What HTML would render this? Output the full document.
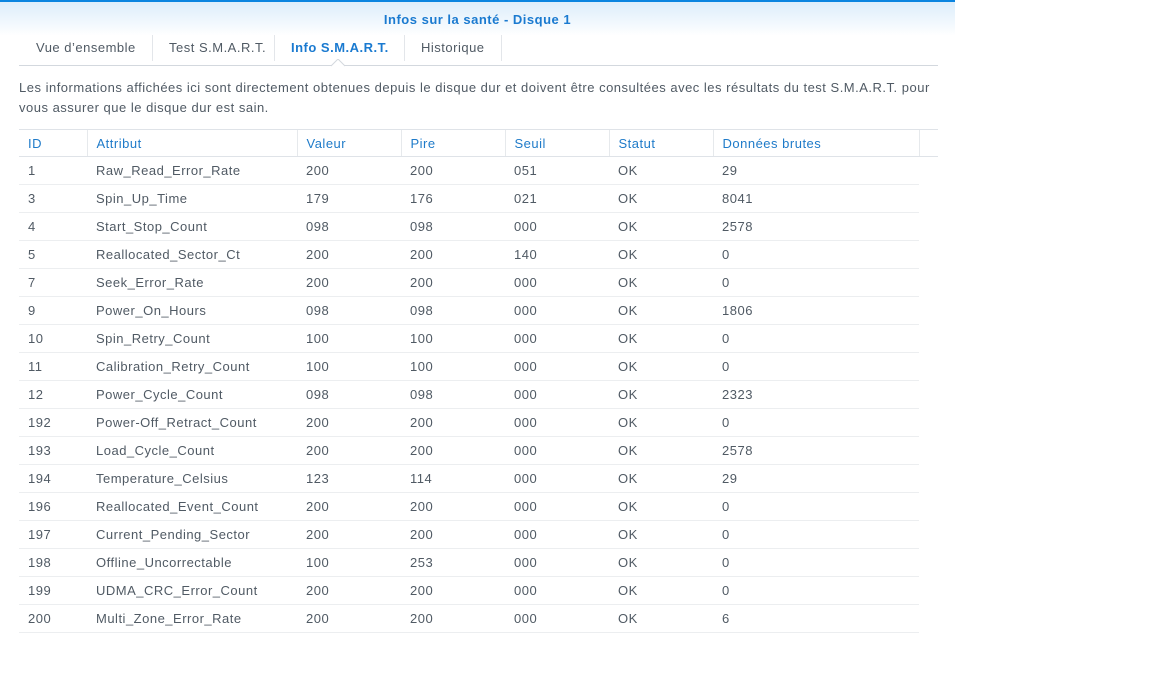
<!DOCTYPE html>
<html><head><meta charset="utf-8"><style>
body{margin:0;width:1152px;height:700px;background:#fff;font-family:"Liberation Sans",Tahoma,sans-serif;font-size:13px;color:#505a64;position:relative;overflow:hidden;letter-spacing:0.5px}
.a{position:absolute;white-space:nowrap}
.top{left:0;top:0;width:955px;height:2px;background:#0a84e0}
.hdr{left:0;top:2px;width:955px;height:34px;background:linear-gradient(#dcedfb,#ffffff)}
.title{left:0;width:955px;top:12px;text-align:center;font-weight:bold;color:#1a7ad0}
.tab{top:40px}
.sep{top:35px;width:1px;height:26px;background:#e3e6ea}
.uline{left:19px;top:65px;width:919px;height:1px;background:#d3d8de}
table{position:absolute;left:19px;top:129px;border-collapse:collapse;table-layout:fixed}
td,th{height:27px;padding:0 0 0 9px;text-align:left;font-weight:normal;border-bottom:1px solid #eceef0;white-space:nowrap}
th{height:26px;color:#1f7bc9;border-top:1px solid #dfe3e8;border-bottom:1px solid #dfe3e8;border-left:1px solid #e6e9ec}
th:first-child{border-left:none}
</style></head><body>
<div class="a top"></div><div class="a hdr"></div>
<div class="a title">Infos sur la santé - Disque 1</div>
<div class="a tab" style="left:36px">Vue d’ensemble</div>
<div class="a sep" style="left:152px"></div>
<div class="a tab" style="left:169px">Test S.M.A.R.T.</div>
<div class="a sep" style="left:274px"></div>
<div class="a tab" style="left:291px;font-weight:bold;color:#1a7ad0">Info S.M.A.R.T.</div>
<div class="a sep" style="left:404px"></div>
<div class="a tab" style="left:421px">Historique</div>
<div class="a sep" style="left:501px"></div>
<div class="a uline"></div>
<svg class="a" style="left:331px;top:59px" width="14" height="8"><path d="M0 7 L7 0 L14 7" fill="#fff" stroke="#d3d8de"/></svg>
<div class="a" style="left:19px;top:78px;line-height:20px">Les informations affichées ici sont directement obtenues depuis le disque dur et doivent être consultées avec les résultats du test S.M.A.R.T. pour<br>vous assurer que le disque dur est sain.</div>
<table>
<colgroup><col style="width:68px"><col style="width:210px"><col style="width:104px"><col style="width:104px"><col style="width:104px"><col style="width:104px"><col style="width:206px"><col style="width:19px"></colgroup>
<tr><th>ID</th><th>Attribut</th><th>Valeur</th><th>Pire</th><th>Seuil</th><th>Statut</th><th>Données brutes</th><th></th></tr>
<tr><td>1</td><td>Raw_Read_Error_Rate</td><td>200</td><td>200</td><td>051</td><td>OK</td><td>29</td><td style="border:none"></td></tr>
<tr><td>3</td><td>Spin_Up_Time</td><td>179</td><td>176</td><td>021</td><td>OK</td><td>8041</td><td style="border:none"></td></tr>
<tr><td>4</td><td>Start_Stop_Count</td><td>098</td><td>098</td><td>000</td><td>OK</td><td>2578</td><td style="border:none"></td></tr>
<tr><td>5</td><td>Reallocated_Sector_Ct</td><td>200</td><td>200</td><td>140</td><td>OK</td><td>0</td><td style="border:none"></td></tr>
<tr><td>7</td><td>Seek_Error_Rate</td><td>200</td><td>200</td><td>000</td><td>OK</td><td>0</td><td style="border:none"></td></tr>
<tr><td>9</td><td>Power_On_Hours</td><td>098</td><td>098</td><td>000</td><td>OK</td><td>1806</td><td style="border:none"></td></tr>
<tr><td>10</td><td>Spin_Retry_Count</td><td>100</td><td>100</td><td>000</td><td>OK</td><td>0</td><td style="border:none"></td></tr>
<tr><td>11</td><td>Calibration_Retry_Count</td><td>100</td><td>100</td><td>000</td><td>OK</td><td>0</td><td style="border:none"></td></tr>
<tr><td>12</td><td>Power_Cycle_Count</td><td>098</td><td>098</td><td>000</td><td>OK</td><td>2323</td><td style="border:none"></td></tr>
<tr><td>192</td><td>Power-Off_Retract_Count</td><td>200</td><td>200</td><td>000</td><td>OK</td><td>0</td><td style="border:none"></td></tr>
<tr><td>193</td><td>Load_Cycle_Count</td><td>200</td><td>200</td><td>000</td><td>OK</td><td>2578</td><td style="border:none"></td></tr>
<tr><td>194</td><td>Temperature_Celsius</td><td>123</td><td>114</td><td>000</td><td>OK</td><td>29</td><td style="border:none"></td></tr>
<tr><td>196</td><td>Reallocated_Event_Count</td><td>200</td><td>200</td><td>000</td><td>OK</td><td>0</td><td style="border:none"></td></tr>
<tr><td>197</td><td>Current_Pending_Sector</td><td>200</td><td>200</td><td>000</td><td>OK</td><td>0</td><td style="border:none"></td></tr>
<tr><td>198</td><td>Offline_Uncorrectable</td><td>100</td><td>253</td><td>000</td><td>OK</td><td>0</td><td style="border:none"></td></tr>
<tr><td>199</td><td>UDMA_CRC_Error_Count</td><td>200</td><td>200</td><td>000</td><td>OK</td><td>0</td><td style="border:none"></td></tr>
<tr><td>200</td><td>Multi_Zone_Error_Rate</td><td>200</td><td>200</td><td>000</td><td>OK</td><td>6</td><td style="border:none"></td></tr>
</table>
</body></html>
